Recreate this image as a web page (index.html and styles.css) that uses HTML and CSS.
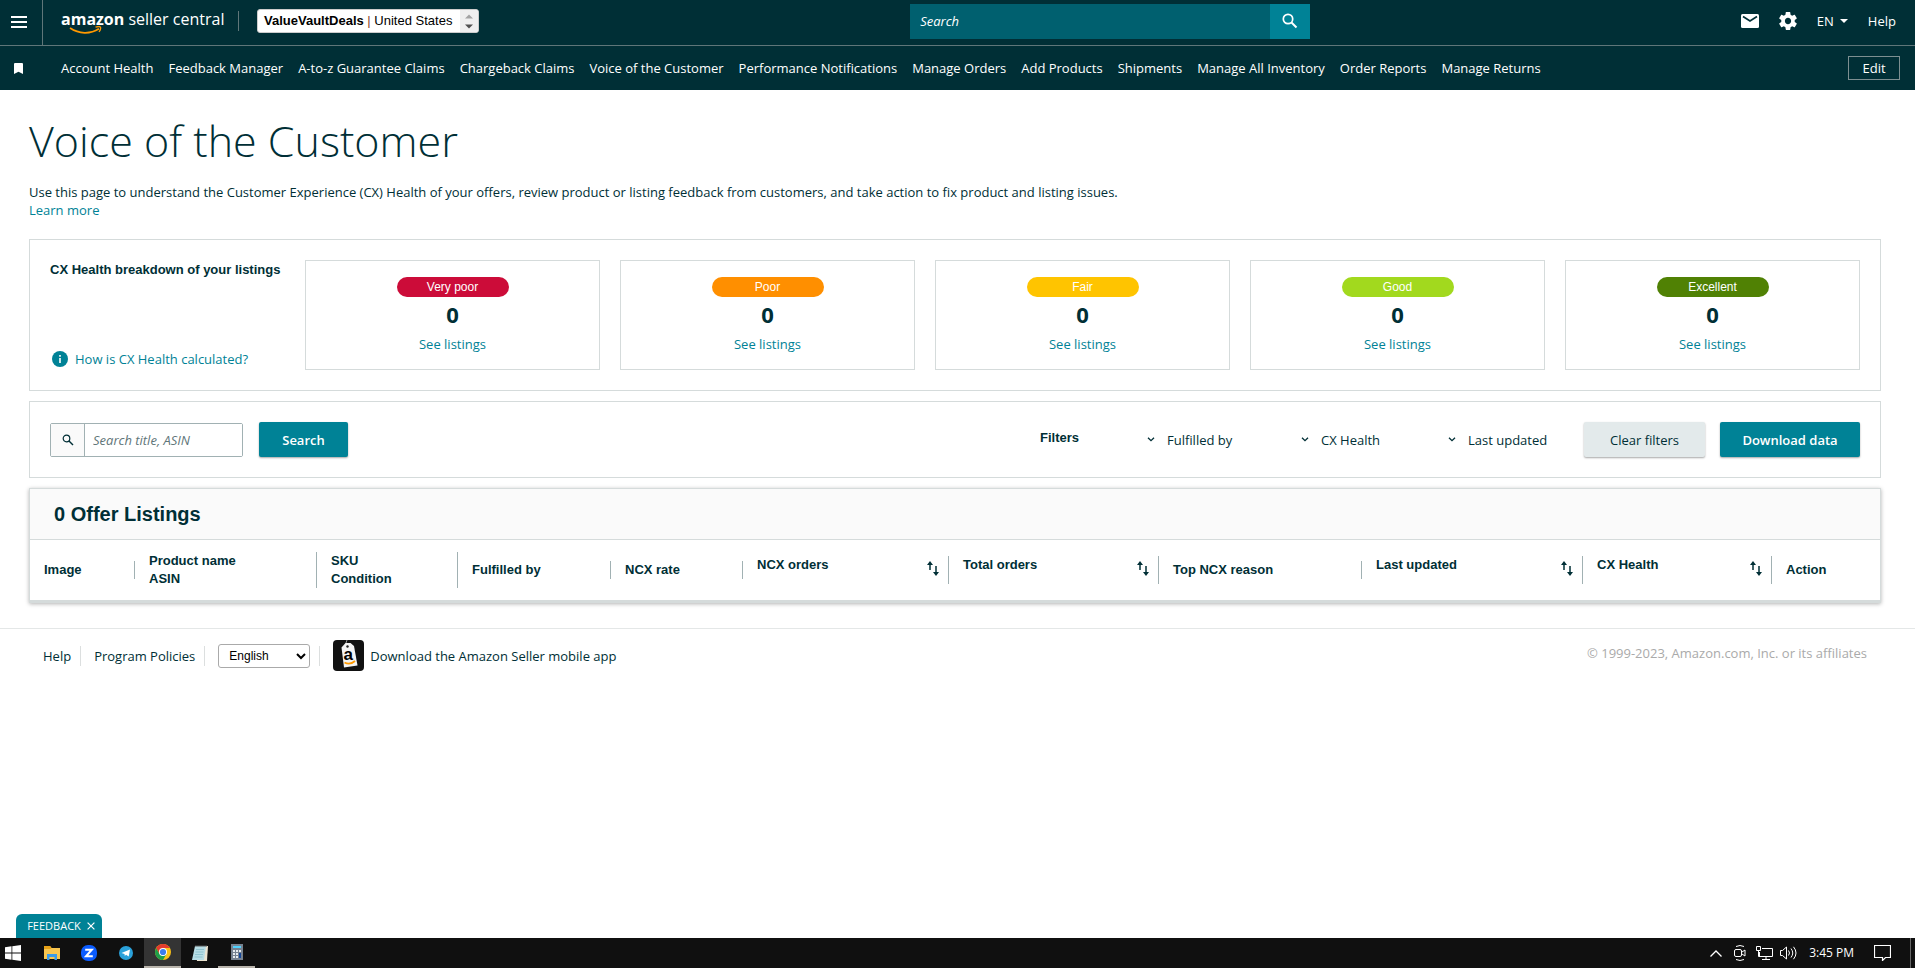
FILE: index.html
```html
<!DOCTYPE html>
<html lang="en">
<head>
<meta charset="utf-8">
<title>Voice of the Customer</title>
<link rel="stylesheet" href="styles.css">
</head>
<body>
<header class="site-header">
  <div class="topbar">
    <button class="menu-btn" aria-label="Menu">
      <svg width="16" height="12" viewBox="0 0 16 12"><path d="M0 1h16M0 6h16M0 11h16" stroke="#fff" stroke-width="2"/></svg>
    </button>
    <a class="logo" href="#"><b>amazon</b> seller central
      <svg class="smile" width="34" height="9" viewBox="0 0 34 9"><path d="M1 2c9 6 20 6.500 29 .8" fill="none" stroke="#f90" stroke-width="1.800"/><path d="M26.500 1.200c2-.7 4-.8 4.900-.1.600 1-.2 3.200-1.400 4.900" fill="none" stroke="#f90" stroke-width="1.300"/></svg>
    </a>
    <span class="top-sep"></span>
    <button class="account" aria-haspopup="listbox">
      <span class="account-name"><b>ValueVaultDeals</b> <i>|</i> United States</span>
      <span class="account-arrows"><svg width="8" height="15" viewBox="0 0 8 15"><path d="M0 4.500 4 .5l4 4z" fill="#a3a3a3"/><path d="M0 10.500 4 14.500l4-4z" fill="#505050"/></svg></span>
    </button>
    <form class="site-search">
      <input type="text" aria-label="Search" placeholder="Search">
      <button type="button" aria-label="Search"><svg width="16" height="16" viewBox="0 0 16 16"><circle cx="6" cy="6" r="4.700" fill="none" stroke="#fff" stroke-width="1.700"/><path d="m9.500 9.500 5 5" stroke="#fff" stroke-width="2"/></svg></button>
    </form>
    <div class="top-actions">
      <button aria-label="Messages"><svg width="18" height="14" viewBox="0 0 18 14"><rect width="18" height="14" rx="1.500" fill="#fff"/><path d="m2 2.500 7 4.500 7-4.500" fill="none" stroke="#002f36" stroke-width="1.700"/></svg></button>
      <button aria-label="Settings"><svg width="18" height="18" viewBox="2 2 20 20"><path fill="#fff" d="M19.430 12.980c.04-.32.070-.64.070-.98s-.03-.66-.07-.98l2.110-1.650c.19-.15.240-.42.120-.64l-2-3.460c-.12-.22-.39-.3-.61-.22l-2.490 1c-.52-.4-1.080-.73-1.690-.98l-.38-2.650C14.460 2.180 14.250 2 14 2h-4c-.25 0-.46.180-.49.420l-.38 2.650c-.61.250-1.170.590-1.690.980l-2.490-1c-.23-.09-.49 0-.61.220l-2 3.460c-.13.220-.07.490.120.640l2.110 1.650c-.04.320-.07.650-.07.980s.03.660.07.980l-2.110 1.650c-.19.150-.24.420-.12.640l2 3.460c.12.220.390.300.610.220l2.490-1c.52.400 1.080.730 1.690.980l.38 2.650c.03.240.240.420.490.420h4c.25 0 .46-.18.490-.42l.38-2.650c.61-.25 1.170-.59 1.690-.98l2.490 1c.23.090.490 0 .61-.22l2-3.460c.12-.22.070-.49-.12-.64zM12 15.500c-1.930 0-3.500-1.570-3.500-3.500s1.570-3.500 3.500-3.500 3.500 1.570 3.500 3.500-1.570 3.500-3.500 3.500"/></svg></button>
      <button class="lang">EN <svg width="8" height="4" viewBox="0 0 8 4"><path d="M0 0h8L4 4z" fill="#fff"/></svg></button>
      <a href="#">Help</a>
    </div>
  </div>
  <div class="favbar">
    <svg class="bookmark" width="9" height="11" viewBox="0 0 9 11"><path d="M0 1q0-1 1-1h7q1 0 1 1v10L4.500 8.700 0 11z" fill="#fff"/></svg>
    <nav class="fav-links">
      <a href="#">Account Health</a><a href="#">Feedback Manager</a><a href="#">A-to-z Guarantee Claims</a><a href="#">Chargeback Claims</a><a href="#">Voice of the Customer</a><a href="#">Performance Notifications</a><a href="#">Manage Orders</a><a href="#">Add Products</a><a href="#">Shipments</a><a href="#">Manage All Inventory</a><a href="#">Order Reports</a><a href="#">Manage Returns</a>
    </nav>
    <button class="edit-btn">Edit</button>
  </div>
</header>

<main class="page">
  <h1>Voice of the Customer</h1>
  <p class="intro">Use this page to understand the Customer Experience (CX) Health of your offers, review product or listing feedback from customers, and take action to fix product and listing issues.<br><a href="#">Learn more</a></p>

  <section class="panel health">
    <div class="health-side">
      <h2>CX Health breakdown of your listings</h2>
      <a class="how" href="#"><svg width="16" height="16" viewBox="0 0 16 16"><circle cx="8" cy="8" r="8" fill="#008296"/><path d="M8 7v5M8 4v1.700" stroke="#fff" stroke-width="1.600"/></svg>How is CX Health calculated?</a>
    </div>
    <div class="tile"><span class="pill very-poor">Very poor</span><strong>0</strong><a href="#">See listings</a></div>
    <div class="tile"><span class="pill poor">Poor</span><strong>0</strong><a href="#">See listings</a></div>
    <div class="tile"><span class="pill fair">Fair</span><strong>0</strong><a href="#">See listings</a></div>
    <div class="tile"><span class="pill good">Good</span><strong>0</strong><a href="#">See listings</a></div>
    <div class="tile"><span class="pill excellent">Excellent</span><strong>0</strong><a href="#">See listings</a></div>
  </section>

  <section class="panel filters">
    <div class="asin-box">
      <span class="asin-icon"><svg width="12" height="12" viewBox="0 0 12 12"><circle cx="4.500" cy="4.500" r="3.300" fill="none" stroke="#002f36" stroke-width="1.200"/><path d="m7 7 4 4" stroke="#002f36" stroke-width="1.500"/></svg></span>
      <input type="text" aria-label="Search title, ASIN" placeholder="Search title, ASIN">
    </div>
    <button class="btn primary">Search</button>
    <h2 class="filters-label">Filters</h2>
    <button class="drop fulfilled"><svg width="8" height="5" viewBox="0 0 8 5"><path d="m1 .7 3 3 3-3" fill="none" stroke="#002f36" stroke-width="1.300"/></svg>Fulfilled by</button>
    <button class="drop cx"><svg width="8" height="5" viewBox="0 0 8 5"><path d="m1 .7 3 3 3-3" fill="none" stroke="#002f36" stroke-width="1.300"/></svg>CX Health</button>
    <button class="drop updated"><svg width="8" height="5" viewBox="0 0 8 5"><path d="m1 .7 3 3 3-3" fill="none" stroke="#002f36" stroke-width="1.300"/></svg>Last updated</button>
    <button class="btn secondary">Clear filters</button>
    <button class="btn primary download">Download data</button>
  </section>

  <section class="listings">
    <h2>0 Offer Listings</h2>
    <table>
      <colgroup><col class="c1"><col class="c2"><col class="c3"><col class="c4"><col class="c5"><col class="c6"><col class="c7"><col class="c8"><col class="c9"><col class="c10"><col></colgroup>
      <thead><tr>
        <th><div>Image</div></th>
        <th><div>Product name<br>ASIN</div></th>
        <th><div>SKU<br>Condition</div></th>
        <th><div>Fulfilled by</div></th>
        <th><div>NCX rate</div></th>
        <th><div class="sort">NCX orders <button aria-label="Sort by NCX orders"><svg width="12" height="15" viewBox="0 0 12 15"><path d="M3 9V2M9 5v8" stroke="#002f36" stroke-width="1.500"/><path d="M0 4 3 0l3 4zM6 11l3 4 3-4z" fill="#002f36"/></svg></button></div></th>
        <th><div class="sort">Total orders <button aria-label="Sort by total orders"><svg width="12" height="15" viewBox="0 0 12 15"><path d="M3 9V2M9 5v8" stroke="#002f36" stroke-width="1.500"/><path d="M0 4 3 0l3 4zM6 11l3 4 3-4z" fill="#002f36"/></svg></button></div></th>
        <th><div>Top NCX reason</div></th>
        <th><div class="sort">Last updated <button aria-label="Sort by last updated"><svg width="12" height="15" viewBox="0 0 12 15"><path d="M3 9V2M9 5v8" stroke="#002f36" stroke-width="1.500"/><path d="M0 4 3 0l3 4zM6 11l3 4 3-4z" fill="#002f36"/></svg></button></div></th>
        <th><div class="sort">CX Health <button aria-label="Sort by CX Health"><svg width="12" height="15" viewBox="0 0 12 15"><path d="M3 9V2M9 5v8" stroke="#002f36" stroke-width="1.500"/><path d="M0 4 3 0l3 4zM6 11l3 4 3-4z" fill="#002f36"/></svg></button></div></th>
        <th><div>Action</div></th>
      </tr></thead>
    </table>
  </section>
</main>

<footer class="footer">
  <a href="#">Help</a><span class="foot-sep"></span>
  <a href="#">Program Policies</a><span class="foot-sep"></span>
  <select aria-label="Language"><option>English</option></select><span class="foot-sep"></span>
  <a class="app" href="#"><svg width="31" height="31" viewBox="0 0 31 31"><rect width="31" height="31" rx="4" fill="#111"/><path d="M14 0q-2 3 0 6" stroke="#999" fill="none"/><path d="m8.500 7.500 4-4.500h5l3.500 3 3.500 19.500-13.500 2z" fill="#f4f4f4"/><circle cx="14.500" cy="6.500" r="1.200" fill="#222"/><text x="10.500" y="20" font-family="Liberation Sans, sans-serif" font-weight="700" font-size="17" fill="#000">a</text><path d="M11.500 22.500q5.500 3 10.500-1.500" fill="none" stroke="#f90" stroke-width="1.700"/></svg>Download the Amazon Seller mobile app</a>
  <small>© 1999-2023, Amazon.com, Inc. or its affiliates</small>
</footer>

<button class="feedback">FEEDBACK <svg width="8" height="8" viewBox="0 0 8 8"><path d="m.6.6 6.800 6.800M7.400.6.600 7.400" stroke="#fff" stroke-width="1.200"/></svg></button>

<div class="taskbar">
  <button aria-label="Start"><svg width="16" height="16" viewBox="0 0 16 16"><path fill="#fff" d="M0 2.200 6.500 1.300v6.200H0zM7.300 1.200 16 0v7.500H7.300zM0 8.400h6.500v6.300L0 13.800zM7.300 8.400H16V16l-8.700-1.200z"/></svg></button>
  <button aria-label="File Explorer"><svg width="16" height="14" viewBox="0 0 16 14"><path d="M0 0h6l1.500 2H16v11H0z" fill="#f8c64f"/><path d="M0 0h6l1.500 2-1 1H0z" fill="#e6a117"/><path d="M3 14V8h10v6h-2.500v-3h-5v3z" fill="#3a9be8"/></svg></button>
  <button aria-label="Zoom"><svg width="16" height="16" viewBox="0 0 16 16"><rect width="16" height="16" rx="7" fill="#0b5cff"/><path d="M4.200 4.700h6.600L5 11.300h6.800" fill="none" stroke="#fff" stroke-width="2"/></svg></button>
  <button aria-label="Telegram"><svg width="14" height="14" viewBox="0 0 14 14"><circle cx="7" cy="7" r="7" fill="#2aa1da"/><path d="M2.500 7 11 3.500 9.700 10.500 7 8.700 5.800 10 5.500 8z" fill="#fff"/></svg></button>
  <button class="active" aria-label="Chrome"><svg width="16" height="16" viewBox="0 0 16 16"><circle cx="8" cy="8" r="8" fill="#fbc116"/><path d="M1.100 4A8 8 0 0 1 14.900 4H8L4.500 10z" fill="#e33b2e"/><path d="M1.100 4A8 8 0 0 0 8 16l3.500-6H4.500z" fill="#1e9e4a"/><circle cx="8" cy="8" r="4" fill="#fff"/><circle cx="8" cy="8" r="3.100" fill="#3b7ded"/></svg></button>
  <button aria-label="Notepad"><svg width="16" height="16" viewBox="0 0 16 16"><path d="M3 1h13l-1 15H5z" fill="#ece5d2"/><path d="M3 1h11l-2 14H0z" fill="#b7dde6"/><path d="M4 4.500h8M3.500 7h8M3 9.500h8M2.500 12h8" stroke="#8fc3cf"/><path d="M3.500 1h11" stroke="#555" stroke-width="2" stroke-dasharray="1 1"/></svg></button>
  <button class="open" aria-label="Calculator"><svg width="12" height="16" viewBox="0 0 12 16"><rect width="12" height="16" fill="#76818f"/><rect x="2" y="2" width="8" height="2" fill="#4fd2ff"/><path d="M3 6v8M6 6v8" stroke="#e6eaee" stroke-width="2" stroke-dasharray="2 1"/><path d="M9 6v2" stroke="#e6eaee" stroke-width="2"/><path d="M9 9v5" stroke="#15489a" stroke-width="2"/></svg></button>
  <div class="tray">
    <span class="tray-icon"><svg width="12" height="7" viewBox="0 0 12 7"><path d="m.5 6.500 5.500-5.500 5.500 5.500" fill="none" stroke="#fff" stroke-width="1.300"/></svg></span>
    <span class="tray-icon"><svg width="12" height="16" viewBox="0 0 12 16"><path d="M2 1.500q4-2 8 0M2 14.500q4 2 8 0" fill="none" stroke="#fff"/><rect x=".5" y="4.500" width="7" height="7" rx="1.500" fill="none" stroke="#fff"/><path d="M8 7l3-2v6L8 9" fill="none" stroke="#fff"/></svg></span>
    <span class="tray-icon"><svg width="17" height="14" viewBox="0 0 17 14"><path d="M6 2.500h10.500v8H3.500V6M10 10.500v3M6 13.500h8M.5.500h4v4h-4zM2.500 4.500v6H4" fill="none" stroke="#fff"/></svg></span>
    <span class="tray-icon"><svg width="17" height="14" viewBox="0 0 17 14"><path d="M.5 4.500h2l4-3.500v12l-4-3.500h-2zM8.500 4.500q2 2.500 0 5M11 2.500q3.500 4.500 0 9M13.500.8q5 6.200 0 12.400" fill="none" stroke="#fff"/></svg></span>
    <span class="clock">3:45 PM</span>
    <svg width="17" height="16" viewBox="0 0 17 16"><path d="M.5.500h16v12h-5l-3 3v-3h-8z" fill="none" stroke="#fff" stroke-width="1.200"/></svg>
    <span class="peek"></span>
  </div>
</div>
</body>
</html>
```
FILE: styles.css
```css
* { box-sizing: border-box; }
:root {
  --ink: #002f36;
  --teal: #008296;
  --line: #d5dbdb;
  --ember: "Open Sans", "Noto Sans", sans-serif;
  --arial: "Liberation Sans", Arial, sans-serif;
}
body {
  margin: 0;
  min-height: 100vh;
  display: flex;
  flex-direction: column;
  background: #fff;
  color: var(--ink);
  font: 13px/18px var(--ember);
}
h1, h2, p { margin: 0; }
a { color: inherit; text-decoration: none; }
button, input, select { font: inherit; color: inherit; }
button { border: 0; background: none; padding: 0; cursor: pointer; }
svg { display: block; flex: none; }

.site-header { background: var(--ink); color: #fff; font-weight: 500; }
.topbar {
  display: flex;
  align-items: center;
  height: 46px;
  border-bottom: 1px solid #5f7679;
}
.menu-btn {
  width: 43px;
  height: 45px;
  padding: 0 0 2px 11px;
  border-right: 1px solid #5f7679;
}
.logo {
  position: relative;
  width: 159px;
  margin: 0 18px;
  padding-bottom: 8px;
  font-size: 16px;
  line-height: 22px;
  font-weight: 400;
  white-space: nowrap;
}
.smile { position: absolute; left: 8px; top: 18px; }
.top-sep { width: 1px; height: 20px; margin-bottom: 3px; background: #5f7679; }
.account {
  display: flex;
  align-items: stretch;
  height: 24px;
  margin: 0 0 3px 18px;
  border: 1px solid #ccc;
  border-radius: 3px;
  overflow: hidden;
  background: #fff;
  color: #000;
  font: 13px/22px var(--arial);
}
.account-name { padding: 0 8px 0 6px; white-space: nowrap; }
.account-name i { color: #8a3b2a; font-style: normal; }
.account-arrows { display: flex; align-items: center; padding: 0 5px; background: #efefef; }
.site-search { display: flex; width: 400px; height: 35px; margin: 0 auto 3px; }
.site-search input {
  flex: 1;
  min-width: 0;
  padding: 0 10px;
  border: 0;
  background: #00606f;
  color: #fff;
}
.site-search input::placeholder { color: #fff; font-style: italic; opacity: 1; }
.site-search button {
  display: grid;
  place-items: center;
  width: 40px;
  background: var(--teal);
}
.top-actions { display: flex; align-items: center; gap: 20px; padding: 0 19px 3px 0; }
.lang { display: flex; align-items: center; gap: 6px; }
.favbar { display: flex; align-items: center; height: 44px; padding: 0 15px 0 14px; }
.fav-links { display: flex; gap: 15px; margin-left: 38px; white-space: nowrap; }
.edit-btn {
  width: 52px;
  height: 24px;
  margin-left: auto;
  border: 1px solid #7d8f91;
}

.page { padding: 25px 34px 0 29px; }
h1 { font-size: 43px; line-height: 52px; font-weight: 300; }
.intro { margin: 16px 0 20px; }
.intro a, .tile a, .how { color: var(--teal); }
h2 { font: 700 13px/18px var(--arial); }
.panel { border: 1px solid var(--line); margin-bottom: 10px; }
.health {
  display: grid;
  grid-template-columns: 235px repeat(5, 1fr);
  gap: 20px;
  height: 152px;
  padding: 20px;
}
.health-side {
  display: flex;
  flex-direction: column;
  justify-content: space-between;
  height: 108px;
  padding-top: 1px;
  white-space: nowrap;
}
.how { display: flex; align-items: center; gap: 7px; padding-left: 2px; }
.tile {
  display: flex;
  flex-direction: column;
  align-items: center;
  height: 110px;
  padding-top: 16px;
  border: 1px solid var(--line);
}
.pill {
  width: 112px;
  border-radius: 10px;
  color: #fff;
  text-align: center;
  font: 12px/20px var(--arial);
}
.very-poor { background: #cc0c39; }
.poor { background: #ff8f00; }
.fair { background: #ffc400; }
.good { background: #a2d91e; }
.excellent { background: #508104; }
.tile strong { margin-bottom: 3px; font-size: 22px; line-height: 35px; }

.filters { display: flex; align-items: center; height: 77px; padding: 0 20px; }
.asin-box {
  display: flex;
  width: 193px;
  height: 34px;
  margin-right: 16px;
  border: 1px solid #a1b1b3;
  border-radius: 2px;
}
.asin-icon {
  display: grid;
  place-items: center;
  width: 34px;
  border-right: 1px solid #a1b1b3;
  background: #fafafa;
}
.asin-box input { flex: 1; min-width: 0; padding: 0 8px; border: 0; }
.asin-box input::placeholder { color: #5f7679; font-style: italic; opacity: 1; }
.btn { height: 35px; border-radius: 2px; box-shadow: 0 1px 2px rgba(0, 0, 0, .35); }
.primary { width: 89px; background: var(--teal); color: #fff; font-weight: 600; }
.filters-label { margin-left: auto; padding-bottom: 3px; width: 107px; }
.drop { display: flex; align-items: center; gap: 12px; white-space: nowrap; }
.fulfilled { width: 154px; }
.cx { width: 147px; }
.updated { width: 136px; }
.secondary { width: 121px; background: #e3eaeb; }
.download { width: 140px; margin-left: 15px; }

.listings {
  border: 1px solid var(--line);
  border-bottom-width: 3px;
  box-shadow: 0 1px 4px rgba(0, 0, 0, .3);
}
.listings h2 {
  padding: 0 24px;
  border-bottom: 1px solid var(--line);
  background: #fafafa;
  font-size: 20px;
  line-height: 50px;
}
table { width: 100%; table-layout: fixed; border-collapse: collapse; }
th {
  height: 60px;
  padding: 0;
  text-align: left;
  vertical-align: middle;
  font: 700 13px/18px var(--arial);
}
th div { padding-left: 14px; border-right: 1px solid #a1b1b3; }
th:last-child div { border: 0; }
.sort { display: flex; justify-content: space-between; height: 28px; padding-right: 9px; }
.sort button { align-self: flex-start; padding-top: 5px; }
.c1 { width: 105px; }
.c2 { width: 182px; }
.c3 { width: 141px; }
.c4 { width: 153px; }
.c5 { width: 132px; }
.c6 { width: 206px; }
.c7 { width: 210px; }
.c8 { width: 203px; }
.c9 { width: 221px; }
.c10 { width: 189px; }

.footer {
  display: flex;
  align-items: center;
  margin-top: 25px;
  padding: 11px 48px 0 43px;
  border-top: 1px solid #e4e7e7;
}
.foot-sep { width: 1px; height: 20px; margin: 0 13px 0 9px; background: #dcdfdf; }
.footer select {
  width: 92px;
  height: 24px;
  padding: 0 6px;
  border: 1px solid #aaa;
  border-radius: 3px;
  background: #fff;
  color: #000;
  font: 12px/20px var(--arial);
}
.app { display: flex; align-items: center; gap: 6px; }
.footer small { margin-left: auto; padding-bottom: 6px; font-size: 13px; color: #aaa; }

.feedback {
  display: flex;
  align-items: center;
  justify-content: center;
  gap: 6px;
  width: 86px;
  height: 24px;
  margin: auto 0 0 16px;
  padding-left: 4px;
  border-radius: 6px 6px 0 0;
  background: var(--teal);
  color: #fff;
  font-size: 11px;
  font-weight: 500;
}
.taskbar { display: flex; align-items: stretch; height: 30px; background: #101010; color: #fff; }
.taskbar button { display: grid; place-items: center; width: 37px; }
.taskbar button:first-child { width: 33px; padding-right: 7px; }
.taskbar .active { background: #343434; border-bottom: 2px solid #b9b4ac; }
.taskbar .open { border-bottom: 2px solid #b9b4ac; }
.tray { display: flex; align-items: center; margin-left: auto; }
.tray-icon { display: grid; place-items: center; width: 24px; }
.clock { margin: 0 20px 0 9px; font-size: 12px; }
.peek { width: 1px; height: 30px; margin: 0 4px 0 19px; background: #666; }
```
